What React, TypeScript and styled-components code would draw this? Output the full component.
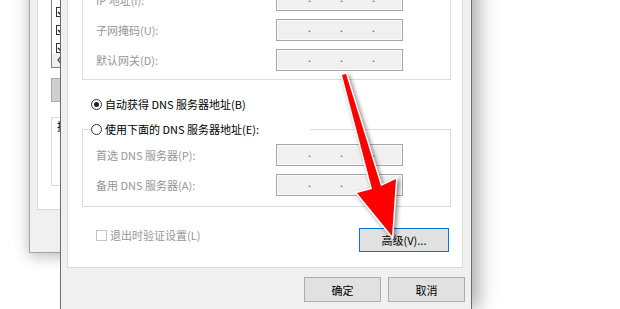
import React from "react";
import styled, { createGlobalStyle } from "styled-components";

const Global = createGlobalStyle`
  html, body { margin: 0; padding: 0; background: #fff; }
  body { overflow: hidden; }
  *, *::before, *::after { box-sizing: border-box; }
`;

const uiFont = `"Noto Sans CJK SC", "Noto Sans", "Liberation Sans", sans-serif`;

const Desktop = styled.div`
  position: relative;
  width: 620px;
  height: 309px;
  overflow: hidden;
  background: #fff;
  font-family: ${uiFont};
  font-size: 11px;
  line-height: 16px;
  color: #000;
`;

/* ---------- background window (partly hidden) ---------- */
const BgWindow = styled.div`
  position: absolute;
  left: 29px;
  top: -50px;
  width: 320px;
  height: 303px;
  background: #f0f0f0;
  border: 1px solid #a3a3a3;
  box-shadow: 0 3px 14px rgba(0, 0, 0, 0.28);
  padding: 9px 7px 0 7px;
`;

const BgPanel = styled.div`
  height: 250px;
  background: #fff;
  border: 1px solid #d9d9d9;
  padding: 10px 13px;
  display: flex;
  flex-direction: column;
`;

const ListBox = styled.div`
  height: 97px;
  border: 1px solid #828282;
  display: flex;
  flex-direction: column;
`;

const ListArea = styled.div`
  height: 81px;
  overflow: hidden;
  padding: 13px 0 0 4px;
  display: flex;
  flex-direction: column;
`;

const ListItem = styled.div`
  height: 18px;
  flex: none;
  display: flex;
  align-items: center;
`;

const ItemCheck = styled.span`
  width: 10px;
  height: 10px;
  flex: none;
  border: 1px solid #333;
  background: #fff;
  display: flex;
  align-items: center;
  justify-content: center;
`;

const HScroll = styled.div`
  height: 14px;
  background: #f0f0f0;
  display: flex;
  align-items: center;
  padding-left: 5px;
`;

const BgButton = styled.div`
  margin-top: 10px;
  width: 80px;
  height: 24px;
  background: #cfcfcf;
  border: 1px solid #adadad;
`;

const BgGroup = styled.div`
  margin-top: 15px;
  height: 69px;
  border: 1px solid #dcdcdc;
`;

const BgCaption = styled.div`
  display: inline-block;
  margin: -9px 0 0 5px;
  padding-right: 2px;
  background: #fff;
  color: #000;
`;

/* ---------- main dialog ---------- */
const Dialog = styled.div`
  position: absolute;
  left: 60px;
  top: -60px;
  width: 412px;
  background: #f0f0f0;
  border: 1px solid #6b6b6b;
  box-shadow: 12px 2px 18px -6px rgba(0, 0, 0, 0.35);
  padding: 29px 6px 10px 6px;
  display: flex;
  flex-direction: column;
`;

const TabPanel = styled.div`
  margin-right: 2px;
  background: #fff;
  border: 1px solid #d9d9d9;
  padding: 9px 11px 15px 14px;
  display: flex;
  flex-direction: column;
`;

const GroupBox = styled.div<{ $top: number; $bottom: number; $gap?: number }>`
  margin-top: ${(p) => p.$gap ?? 0}px;
  border: 1px solid #dcdcdc;
  padding: ${(p) => p.$top}px 0 ${(p) => p.$bottom}px 0;
  display: flex;
  flex-direction: column;
`;

const FieldList = styled.div<{ $top?: number }>`
  margin-top: ${(p) => p.$top ?? 0}px;
  padding-left: 13px;
  display: flex;
  flex-direction: column;
  gap: 8px;
`;

const FieldRow = styled.div`
  height: 22px;
  display: flex;
  align-items: center;
`;

const FieldLabel = styled.span`
  width: 180px;
  flex: none;
  color: #969696;
  white-space: nowrap;
`;

const IpField = styled.div`
  width: 127px;
  height: 22px;
  flex: none;
  background: #f0f0f0;
  border: 1px solid #a6a6a6;
  box-shadow: inset 0 0 0 1px #fbfbfb;
  display: flex;
  align-items: center;
  padding-left: 31px;
  gap: 29px;
`;

const Dot = styled.span`
  width: 3px;
  line-height: 10px;
  padding-bottom: 6px;
  color: #5a5a5a;
`;

const RadioRow = styled.div`
  height: 16px;
  margin: 16px 0 0 9px;
  display: flex;
  align-items: center;
  gap: 3px;
  white-space: nowrap;
`;

const Caption = styled.div`
  width: 219px;
  height: 16px;
  margin: -9px 0 0 8px;
  background: #fff;
  display: flex;
  align-items: center;
  gap: 3px;
  white-space: nowrap;
`;

const RadioCircle = styled.span<{ $checked?: boolean }>`
  width: 11px;
  height: 11px;
  flex: none;
  border-radius: 50%;
  border: 1px solid #333;
  background: #fff;
  display: flex;
  align-items: center;
  justify-content: center;
  &::after {
    content: "";
    width: 5px;
    height: 5px;
    border-radius: 50%;
    background: #222;
    display: ${(p) => (p.$checked ? "block" : "none")};
  }
`;

const BottomRow = styled.div`
  margin-top: 21px;
  padding: 0 2px 0 14px;
  display: flex;
  justify-content: space-between;
  align-items: flex-start;
`;

const CheckItem = styled.div`
  margin-top: 0;
  height: 14px;
  display: flex;
  align-items: center;
  gap: 3px;
  color: #969696;
  white-space: nowrap;
`;

const CheckBox = styled.span`
  width: 11px;
  height: 11px;
  flex: none;
  border: 1px solid #c4c4c4;
  background: #fff;
`;

const Button = styled.button<{ $w: number; $h: number; $focused?: boolean }>`
  width: ${(p) => p.$w}px;
  height: ${(p) => p.$h}px;
  padding: 0;
  margin: 0;
  font: inherit;
  color: #000;
  background: #e1e1e1;
  border: 1px solid ${(p) => (p.$focused ? "#0078d7" : "#adadad")};
  display: flex;
  align-items: center;
  justify-content: center;
  white-space: nowrap;
`;

const DialogButtons = styled.div`
  margin-top: 9px;
  display: flex;
  justify-content: flex-end;
  gap: 7px;
`;

const ArrowLayer = styled.svg`
  position: absolute;
  left: 0;
  top: 0;
  width: 620px;
  height: 309px;
  pointer-events: none;
  filter: drop-shadow(2px 2px 2px rgba(0, 0, 0, 0.45));
`;

const Ip = () => (
  <IpField>
    <Dot>.</Dot>
    <Dot>.</Dot>
    <Dot>.</Dot>
  </IpField>
);

const Tick = () => (
  <svg width="8" height="8" viewBox="0 0 8 8">
    <path d="M1 4 L3 6 L7 1.5" fill="none" stroke="#222" strokeWidth="1.4" />
  </svg>
);

export default function App() {
  return (
    <>
      <Global />
      <Desktop>
        <BgWindow>
          <BgPanel>
            <ListBox>
              <ListArea>
                {[0, 1, 2, 3].map((i) => (
                  <ListItem key={i}>
                    <ItemCheck>
                      <Tick />
                    </ItemCheck>
                  </ListItem>
                ))}
              </ListArea>
              <HScroll>
                <svg width="5" height="8" viewBox="0 0 5 8">
                  <path d="M4 0.5 L1 4 L4 7.5" fill="none" stroke="#505050" strokeWidth="1.3" />
                </svg>
              </HScroll>
            </ListBox>
            <BgButton />
            <BgGroup>
              <BgCaption>描述</BgCaption>
            </BgGroup>
          </BgPanel>
        </BgWindow>

        <Dialog>
          <TabPanel>
            <GroupBox $top={8} $bottom={8}>
              <FieldList>
                <FieldRow>
                  <FieldLabel>IP 地址(I):</FieldLabel>
                  <Ip />
                </FieldRow>
                <FieldRow>
                  <FieldLabel>子网掩码(U):</FieldLabel>
                  <Ip />
                </FieldRow>
                <FieldRow>
                  <FieldLabel>默认网关(D):</FieldLabel>
                  <Ip />
                </FieldRow>
              </FieldList>
            </GroupBox>

            <RadioRow>
              <RadioCircle $checked />
              自动获得 DNS 服务器地址(B)
            </RadioRow>

            <GroupBox $top={0} $bottom={10} $gap={17}>
              <Caption>
                <RadioCircle />
                使用下面的 DNS 服务器地址(E):
              </Caption>
              <FieldList $top={7}>
                <FieldRow>
                  <FieldLabel>首选 DNS 服务器(P):</FieldLabel>
                  <Ip />
                </FieldRow>
                <FieldRow>
                  <FieldLabel>备用 DNS 服务器(A):</FieldLabel>
                  <Ip />
                </FieldRow>
              </FieldList>
            </GroupBox>

            <BottomRow>
              <CheckItem>
                <CheckBox />
                退出时验证设置(L)
              </CheckItem>
              <Button $w={90} $h={24} $focused>
                高级(V)...
              </Button>
            </BottomRow>
          </TabPanel>

          <DialogButtons>
            <Button $w={77} $h={25}>确定</Button>
            <Button $w={77} $h={25}>取消</Button>
          </DialogButtons>
        </Dialog>

        <ArrowLayer viewBox="0 0 620 309">
          <polygon
            points="342,75 346,74 381,186 396,179 392,236 357,193 372,189"
            fill="#ff0000"
            stroke="#ffffff"
            strokeWidth="3"
            strokeLinejoin="miter"
            paintOrder="stroke"
          />
        </ArrowLayer>
      </Desktop>
    </>
  );
}
